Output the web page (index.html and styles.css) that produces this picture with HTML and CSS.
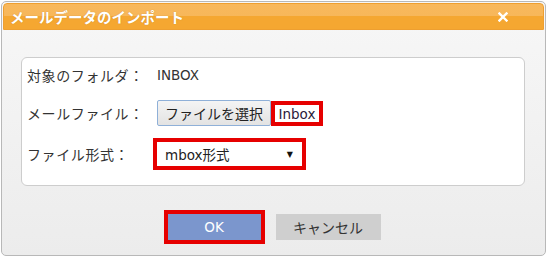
FILE: index.html
```html
<!DOCTYPE html>
<html lang="ja">
<head>
<meta charset="utf-8">
<link rel="stylesheet" href="styles.css">
</head>
<body>
<div class="dialog">
  <div class="titlebar">
    <span class="title">メールデータのインポート</span>
    <svg class="close" width="10" height="10" viewBox="0 0 10 10"><path d="M1.5 1.5 L8.5 8.5 M8.5 1.5 L1.5 8.5" stroke="#fff" stroke-width="2.4" stroke-linecap="square"/></svg>
  </div>
  <div class="body">
    <div class="panel">
      <div class="row row1">
        <span class="label">対象のフォルダ：</span>
        <span class="value">INBOX</span>
      </div>
      <div class="row row2">
        <span class="label">メールファイル：</span>
        <span class="filebtn">ファイルを選択</span>
        <span class="filename">Inbox</span>
      </div>
      <div class="row row3">
        <span class="label">ファイル形式：</span>
        <span class="select"><span>mbox形式</span><span class="arrow">▼</span></span>
      </div>
    </div>
    <div class="buttons">
      <span class="okwrap"><span class="ok">OK</span></span>
      <span class="cancel">キャンセル</span>
    </div>
  </div>
</div>
</body>
</html>
```
FILE: styles.css
```css
html, body {
  margin: 0;
  padding: 0;
  background: #ffffff;
}
body {
  font-family: "DejaVu Sans", "Noto Sans CJK JP", sans-serif;
  font-size: 13.5px;
  color: #333;
}
.dialog {
  margin: 1px;
  height: 251px;
  border: 1px solid #b8b8b8;
  border-radius: 5px;
  padding: 1px;
  background: linear-gradient(#f7f7f7, #ececec);
  display: flex;
  flex-direction: column;
}
.titlebar {
  height: 25px;
  border: 1px solid #ee9f30;
  border-radius: 4px 4px 0 0;
  background: linear-gradient(#f8b85c 0, #f7b75a 50%, #f5a731 50%, #f5a731 100%);
  display: flex;
  align-items: center;
  justify-content: space-between;
  padding: 0 35px 0 6px;
}
.title {
  color: #fff;
  font-family: "Noto Sans CJK JP", sans-serif;
  font-weight: bold;
  font-size: 14.5px;
  letter-spacing: 0;
  text-shadow: 0 0 1px rgba(150, 90, 0, 0.5);
}
.close {
  display: block;
}
.body {
  flex: 1;
  padding: 27px 19px 0 18px;
}
.panel {
  height: 112px;
  border: 1px solid #cdcdcd;
  border-radius: 6px;
  background: #fff;
  padding: 7px 5px 8px 5px;
  display: flex;
  flex-direction: column;
}
.row {
  display: flex;
  align-items: center;
}
.label {
  width: 130px;
  flex: none;
  color: #333;
  font-size: 14px;
  letter-spacing: 0.6px;
}
.row1 { height: 20px; }
.row2 { height: 26px; margin-top: 15px; }
.row3 { height: 32px; margin-top: 12px; }
.value { color: #333; }
.filebtn {
  box-sizing: border-box;
  height: 26px;
  width: 114px;
  border: 1px solid #8fb0d8;
  border-radius: 2px;
  background: linear-gradient(#f4f4f4, #e3e3e3);
  display: flex;
  align-items: center;
  justify-content: center;
  color: #222;
  font-size: 14px;
}
.filename {
  box-sizing: border-box;
  height: 25px;
  width: 52px;
  margin-top: 1px;
  border: 4px solid #e60000;
  background: #fff;
  display: flex;
  align-items: center;
  justify-content: center;
  color: #2a1a3a;
}
.select {
  box-sizing: border-box;
  margin-left: -4px;
  width: 153px;
  height: 32px;
  border: 4px solid #e60000;
  background: #fff;
  display: flex;
  align-items: center;
  justify-content: space-between;
  padding: 0 9px 0 8px;
  color: #222;
}
.arrow {
  font-size: 8px;
  color: #111;
}
.buttons {
  margin-top: 24px;
  display: flex;
  justify-content: center;
  align-items: center;
  gap: 11px;
  padding-right: 2px;
}
.okwrap {
  box-sizing: border-box;
  width: 101px;
  height: 34px;
  border: 4px solid #e60000;
  padding: 0;
  display: flex;
}
.ok {
  flex: 1;
  background: #7b96cd;
  color: #fff;
  display: flex;
  align-items: center;
  justify-content: center;
}
.cancel {
  box-sizing: border-box;
  width: 105px;
  height: 26px;
  background: #cfcfcf;
  color: #333;
  display: flex;
  align-items: center;
  justify-content: center;
  margin-top: -1px;
  font-size: 14px;
}
```
